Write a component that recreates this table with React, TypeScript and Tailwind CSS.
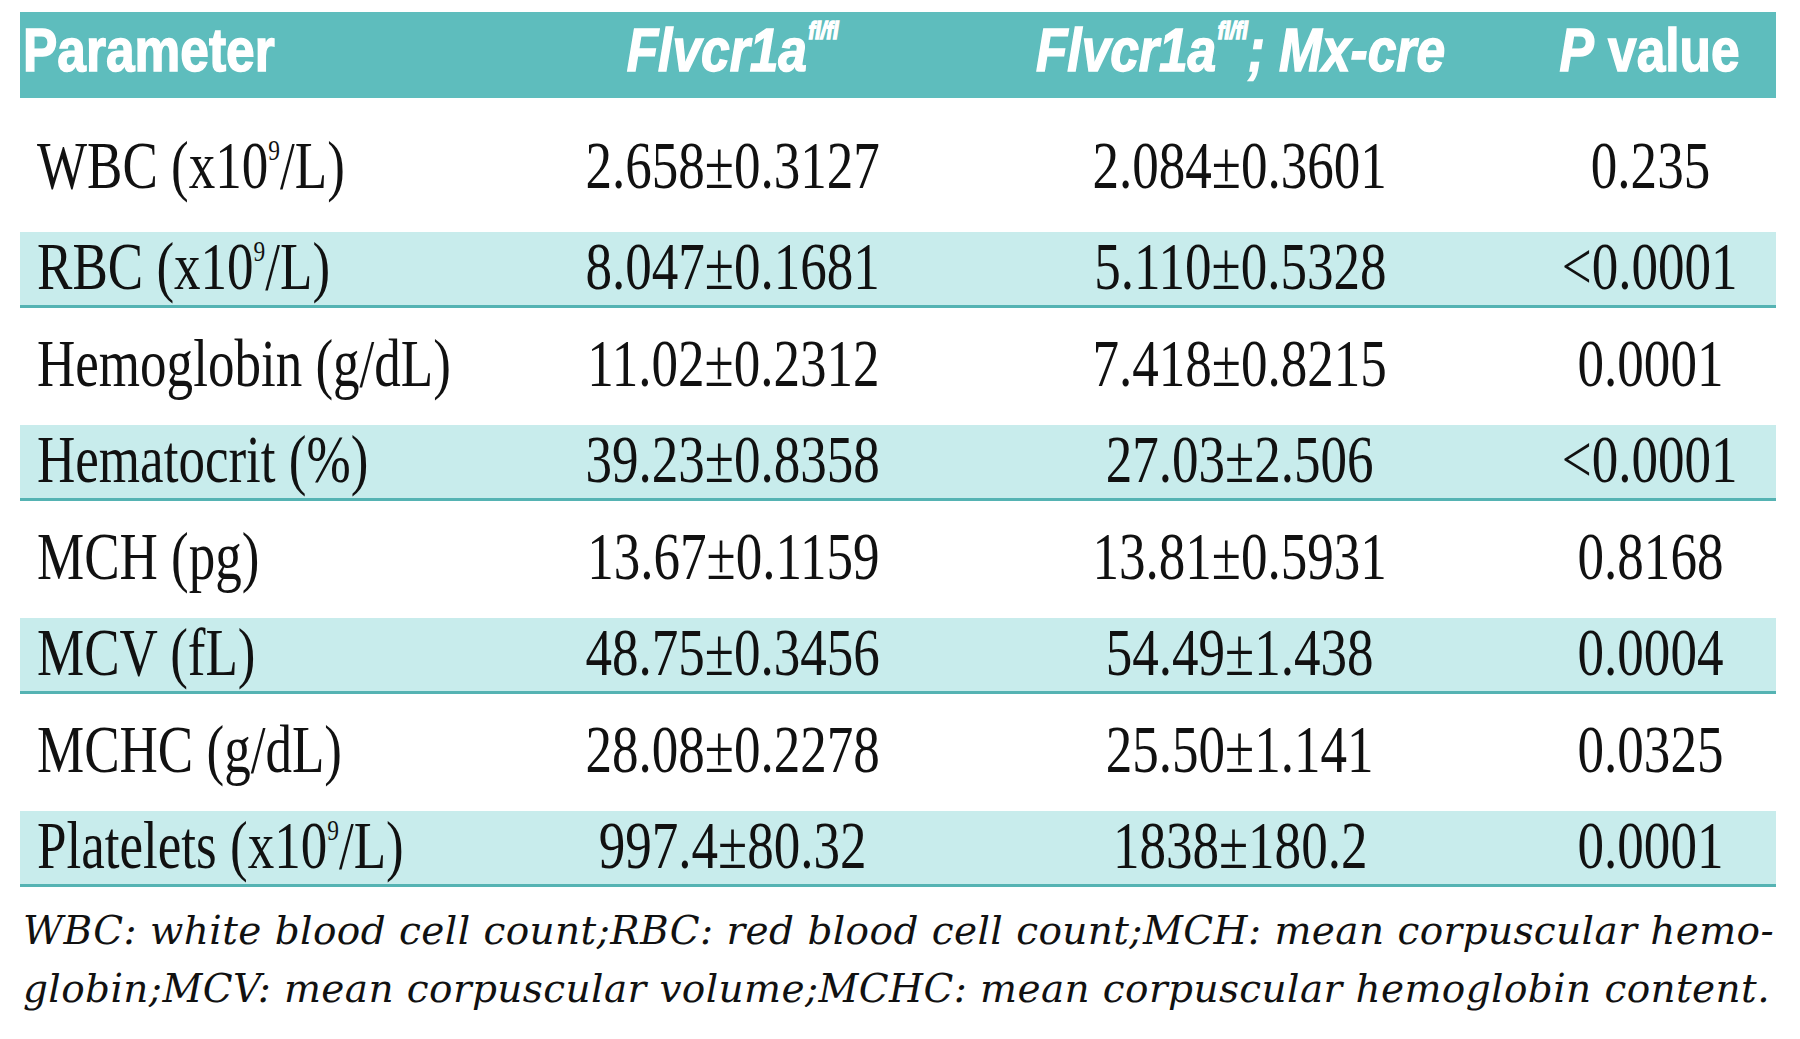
import React from 'react';

interface Row {
  label: React.ReactNode;
  a: string;
  b: string;
  p: string;
}

const sup9 = <sup className="relative top-[-4px] text-[30px] leading-none align-super">9</sup>;

const rows: Row[] = [
  { label: <>WBC (x10{sup9}/L)</>, a: '2.658±0.3127', b: '2.084±0.3601', p: '0.235' },
  { label: <>RBC (x10{sup9}/L)</>, a: '8.047±0.1681', b: '5.110±0.5328', p: '<0.0001' },
  { label: 'Hemoglobin (g/dL)', a: '11.02±0.2312', b: '7.418±0.8215', p: '0.0001' },
  { label: 'Hematocrit (%)', a: '39.23±0.8358', b: '27.03±2.506', p: '<0.0001' },
  { label: 'MCH (pg)', a: '13.67±0.1159', b: '13.81±0.5931', p: '0.8168' },
  { label: 'MCV (fL)', a: '48.75±0.3456', b: '54.49±1.438', p: '0.0004' },
  { label: 'MCHC (g/dL)', a: '28.08±0.2278', b: '25.50±1.141', p: '0.0325' },
  { label: <>Platelets (x10{sup9}/L)</>, a: '997.4±80.32', b: '1838±180.2', p: '0.0001' },
];

const grid = 'grid grid-cols-[500px_426px_588px_232px] pr-[10px] items-center';

const Body: React.FC<{ children: React.ReactNode; left?: boolean }> = ({ children, left }) => (
  <div className={left ? 'flex justify-start pl-[17px]' : 'flex justify-center'}>
    <span
      className={
        'inline-block whitespace-nowrap scale-x-[0.78] ' + (left ? 'origin-left' : 'origin-center')
      }
    >
      {children}
    </span>
  </div>
);

const Head: React.FC<{ children: React.ReactNode; left?: boolean }> = ({ children, left }) => (
  <div className={left ? 'flex justify-start pl-[3px]' : 'flex justify-center'}>
    <span
      className={
        'inline-block whitespace-nowrap scale-x-[0.83] ' + (left ? 'origin-left' : 'origin-center')
      }
    >
      {children}
    </span>
  </div>
);

const FlSup = () => (
  <sup className="relative top-[-10px] ml-[2px] text-[24px] leading-none align-super font-bold italic">fl/fl</sup>
);

export default function App() {
  return (
    <div className="w-[1800px] h-[1039px] bg-white pt-[12px] pl-[20px] overflow-hidden">
      <div className="w-[1756px]">
        {/* Header */}
        <div
          className={
            grid +
            ' h-[86px] pb-[10px] bg-[#5ebdbd] text-white font-bold text-[62px] leading-none [-webkit-text-stroke:1.5px_white]'
          }
          style={{ fontFamily: '"Liberation Sans", Arial, sans-serif' }}
        >
          <Head left>Parameter</Head>
          <Head>
            <i>Flvcr1a</i>
            <FlSup />
          </Head>
          <Head>
            <i>Flvcr1a</i>
            <FlSup />
            <i>; Mx-cre</i>
          </Head>
          <Head>
            <i>P</i> value
          </Head>
        </div>

        {/* Rows */}
        <div
          className="text-[68px] leading-none text-[#111]"
          style={{ fontFamily: '"Liberation Serif", "Times New Roman", serif' }}
        >
          {rows.map((r, i) => {
            const shaded = i % 2 === 1;
            const h =
              i === 0
                ? 'h-[134px] pb-[0px]'
                : shaded
                  ? 'h-[76px] pb-[12px]'
                  : 'h-[117px] pb-[8px]';
            return (
              <div
                key={i}
                className={
                  grid +
                  ' ' +
                  h +
                  (shaded ? ' bg-[#c8ecec] border-b-[3px] border-[#55b3b3]' : '')
                }
              >
                <Body left>{r.label}</Body>
                <Body>{r.a}</Body>
                <Body>{r.b}</Body>
                <Body>{r.p}</Body>
              </div>
            );
          })}
        </div>
      </div>

      {/* Footnote */}
      <div
        className="w-[1754px] mt-[15px] pl-[3px] italic text-[39px] leading-[58px] tracking-[0.4px] text-[#111]"
        style={{ fontFamily: '"DejaVu Serif", serif' }}
      >
        <div className="text-justify [text-align-last:justify] whitespace-nowrap">
          WBC: white blood cell count;RBC: red blood cell count;MCH: mean corpuscular hemo-
        </div>
        <div className="whitespace-nowrap">
          globin;MCV: mean corpuscular volume;MCHC: mean corpuscular hemoglobin content.
        </div>
      </div>
    </div>
  );
}
